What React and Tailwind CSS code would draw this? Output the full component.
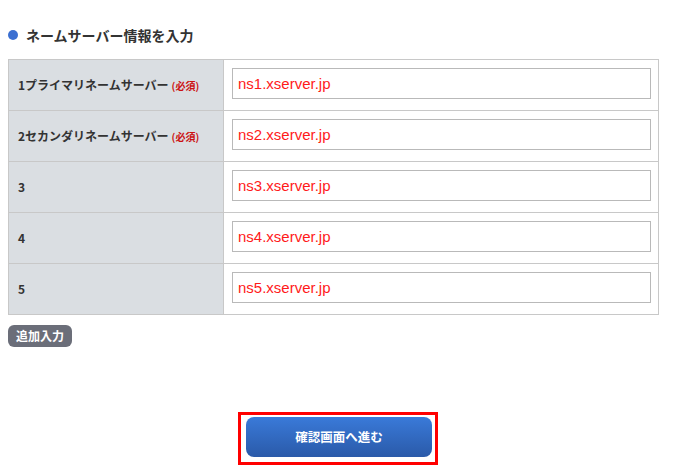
import React from 'react';

const rows = [
  { label: '1プライマリネームサーバー', required: true, value: 'ns1.xserver.jp' },
  { label: '2セカンダリネームサーバー', required: true, value: 'ns2.xserver.jp' },
  { label: '3', required: false, value: 'ns3.xserver.jp' },
  { label: '4', required: false, value: 'ns4.xserver.jp' },
  { label: '5', required: false, value: 'ns5.xserver.jp' },
];

const jp = { fontFamily: '"Noto Sans CJK JP", "Liberation Sans", sans-serif' };

function App() {
  return (
    <div className="w-[695px] h-[476px] bg-white px-2 pt-[26px] text-[#333]" style={jp}>
      <h2 className="flex items-center gap-[8px] h-[18px] text-[14px] font-bold leading-none">
        <span className="w-[10px] h-[10px] rounded-full bg-[#3b6fd1]"></span>
        ネームサーバー情報を入力
      </h2>

      <table className="mt-[15px] w-[651px] border-collapse border border-[#c8c8c8]">
        <tbody>
          {rows.map((r) => (
            <tr key={r.value} className="h-[51px]">
              <th className="w-[215px] bg-[#dadee2] border border-[#c8c8c8] pl-[9px] text-left text-[12px] font-bold">
                {r.label}
                {r.required && <span className="ml-[3px] text-[10px] text-[#cc1111]">(必須)</span>}
              </th>
              <td className="align-top border border-[#c8c8c8] pt-[8px] pl-[8px] pr-[7px]">
                <input
                  type="text"
                  defaultValue={r.value}
                  className="block w-full h-[31px] border border-[#b9b9b9] px-[5px] text-[15px] text-[#ff1a1a] outline-none"
                  style={{ fontFamily: '"Liberation Sans", Arial, sans-serif' }}
                />
              </td>
            </tr>
          ))}
        </tbody>
      </table>

      <button className="block mt-[10px] h-[22px] px-[8px] rounded-[6px] bg-[#6b6e79] text-white text-[12px] font-bold leading-none">
        追加入力
      </button>

      <div className="mt-[65px] ml-[230px] flex">
        <div className="border-[3px] border-[#ff0000] pt-[2px] pb-[5px] pl-[5px] pr-[3px]">
          <button className="block w-[186px] h-[40px] rounded-[8px] bg-gradient-to-b from-[#3a7ad9] to-[#2a5aa9] text-white text-[12.5px] font-bold">
            確認画面へ進む
          </button>
        </div>
      </div>
    </div>
  );
}

export default App;
